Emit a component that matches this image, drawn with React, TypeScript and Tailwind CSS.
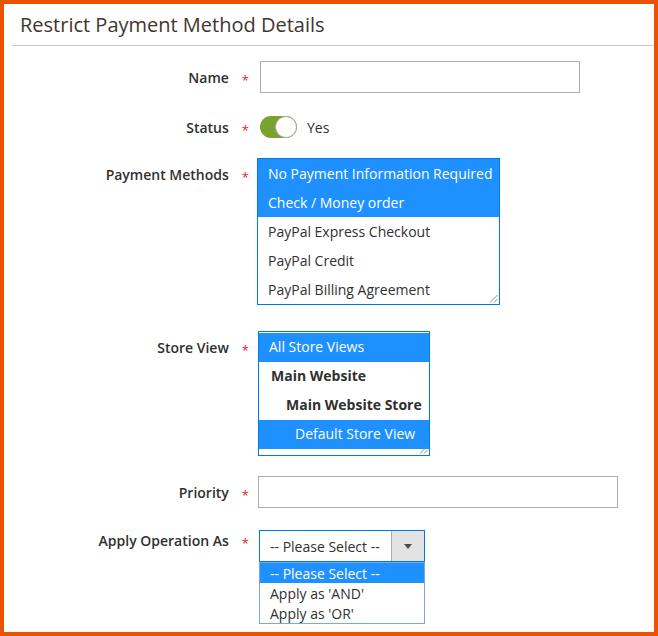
import React from "react";

const Req = () => (
  <span className="ml-[13px] relative top-[2px] text-[13px] font-normal text-[#e22626]">*</span>
);

const Label = ({ text, extra = "" }: { text: string; extra?: string }) => (
  <div className={`w-[245px] shrink-0 text-right text-[14px] leading-[20px] font-semibold text-[#303030] ${extra}`}>
    {text}
    <Req />
  </div>
);

const Grip = () => (
  <svg className="absolute right-[1px] bottom-[1px]" width="9" height="9" viewBox="0 0 9 9">
    <line x1="8.5" y1="1" x2="1" y2="8.5" stroke="#8a8a8a" strokeWidth="1" />
    <line x1="8.5" y1="5" x2="5" y2="8.5" stroke="#8a8a8a" strokeWidth="1" />
  </svg>
);

export default function App() {
  const payments = [
    { t: "No Payment Information Required", s: true },
    { t: "Check / Money order", s: true },
    { t: "PayPal Express Checkout", s: false },
    { t: "PayPal Credit", s: false },
    { t: "PayPal Billing Agreement", s: false },
  ];
  return (
    <div className="w-[658px] h-[636px] border-4 border-[#eb5202] bg-white overflow-hidden font-['Open_Sans',sans-serif]">
      <div className="ml-2 border-b border-[#cccccc] pl-2 pt-[7px] pb-[6px] text-[20px] leading-[28px] text-[#41362f]">
        Restrict Payment Method Details
      </div>

      {/* Name */}
      <div className="mt-[15px] flex items-center">
        <Label text="Name" extra="pt-[2px]" />
        <div className="ml-[11px] w-[320px] h-[32px] border border-[#adadad] bg-white" />
      </div>

      {/* Status */}
      <div className="mt-[23px] flex items-center h-[22px]">
        <Label text="Status" extra="pt-[2px]" />
        <div className="ml-[11px] relative w-[37px] h-[22px] rounded-full bg-[#79a22e]">
          <div className="absolute right-0 top-0 w-[22px] h-[22px] rounded-full bg-white border border-[#adadad]" />
        </div>
        <span className="ml-[10px] pt-[2px] text-[14px] leading-[20px] text-[#303030]">Yes</span>
      </div>

      {/* Payment Methods */}
      <div className="mt-[20px] flex items-start">
        <Label text="Payment Methods" extra="pt-[7px]" />
        <div className="ml-[8px] relative w-[243px] border border-[#007bdb] bg-white">
          {payments.map((p) => (
            <div
              key={p.t}
              className={`h-[29px] pl-[10px] pt-[5px] text-[14px] leading-[20px] whitespace-nowrap ${
                p.s ? "bg-[#1e90ff] text-white" : "text-[#303030]"
              }`}
            >
              {p.t}
            </div>
          ))}
          <Grip />
        </div>
      </div>

      {/* Store View */}
      <div className="mt-[26px] flex items-start">
        <Label text="Store View" extra="pt-[7px]" />
        <div className="ml-[9px] relative w-[172px] h-[125px] border border-[#007bdb] bg-white pt-[1px]">
          <div className="h-[29px] pl-[10px] pt-[4px] text-[14px] leading-[20px] bg-[#1e90ff] text-white whitespace-nowrap">
            All Store Views
          </div>
          <div className="h-[29px] pl-[12px] pt-[4px] text-[14px] leading-[20px] font-bold text-[#303030] whitespace-nowrap">
            Main Website
          </div>
          <div className="h-[29px] pl-[27px] pt-[4px] text-[14px] leading-[20px] font-bold text-[#303030] whitespace-nowrap">
            Main Website Store
          </div>
          <div className="h-[29px] pl-[36px] pt-[4px] text-[14px] leading-[20px] bg-[#1e90ff] text-white whitespace-nowrap">
            Default Store View
          </div>
          <Grip />
        </div>
      </div>

      {/* Priority */}
      <div className="mt-[20px] flex items-center">
        <Label text="Priority" extra="pt-[2px]" />
        <div className="ml-[9px] w-[360px] h-[32px] border border-[#adadad] bg-white" />
      </div>

      {/* Apply Operation As */}
      <div className="mt-[22px] flex items-start">
        <Label text="Apply Operation As" extra="pt-[1px]" />
        <div className="ml-[10px] relative w-[166px]">
          <div className="h-[32px] flex border border-[#007bdb] bg-white">
            <div className="flex-1 flex items-center pl-[10px] pt-[2px] text-[14px] leading-[20px] text-[#303030] whitespace-nowrap">
              -- Please Select --
            </div>
            <div className="w-[33px] flex items-center justify-center bg-[#e3e3e3] border-l border-[#adadad]">
              <div className="w-0 h-0 border-x-4 border-x-transparent border-t-[5px] border-t-[#514943]" />
            </div>
          </div>
          <div className="absolute left-0 top-[32px] w-[166px] border border-[#7ea6df] bg-white">
            <div className="h-[20px] pl-[10px] text-[14px] leading-[22px] bg-[#1e90ff] text-white whitespace-nowrap overflow-hidden">
              -- Please Select --
            </div>
            <div className="h-[20px] pl-[10px] text-[14px] leading-[22px] text-[#303030] whitespace-nowrap overflow-hidden">
              Apply as 'AND'
            </div>
            <div className="h-[20px] pl-[10px] text-[14px] leading-[22px] text-[#303030] whitespace-nowrap overflow-hidden">
              Apply as 'OR'
            </div>
          </div>
        </div>
      </div>
    </div>
  );
}
